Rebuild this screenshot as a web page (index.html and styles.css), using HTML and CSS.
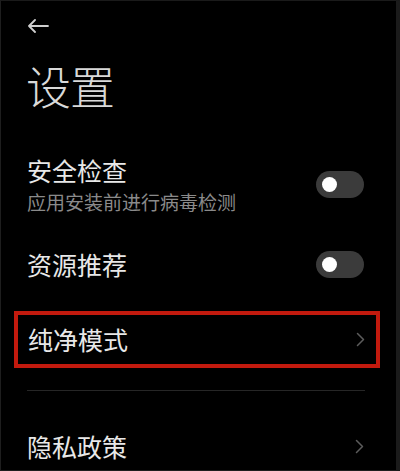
FILE: index.html
```html
<!DOCTYPE html>
<html lang="zh-CN">
<head>
<meta charset="utf-8">
<title>设置</title>
<link rel="stylesheet" href="styles.css">
</head>
<body>
<div class="screen">
  <div class="topbar">
    <svg class="back" width="22" height="14" viewBox="0 0 22 14" aria-label="返回">
      <path d="M21 7H2M8 1L2 7L8 13" fill="none" stroke="#cfcfcf" stroke-width="1.8" stroke-linecap="round" stroke-linejoin="round"/>
    </svg>
  </div>
  <h1 class="title">设置</h1>
  <div class="list">
    <div class="row row-tall">
      <div class="row-text">
        <div class="row-title">安全检查</div>
        <div class="row-sub">应用安装前进行病毒检测</div>
      </div>
      <div class="toggle"><span class="knob"></span></div>
    </div>
    <div class="row">
      <div class="row-title">资源推荐</div>
      <div class="toggle"><span class="knob"></span></div>
    </div>
    <div class="row row-marked">
      <div class="row-title">纯净模式</div>
      <svg class="chev" width="9" height="15" viewBox="0 0 9 15"><path d="M1.5 1.5L7.5 7.5L1.5 13.5" fill="none" stroke="#5c5c5c" stroke-width="1.5" stroke-linecap="round" stroke-linejoin="round"/></svg>
    </div>
    <div class="divider"></div>
    <div class="row row-last">
      <div class="row-title">隐私政策</div>
      <svg class="chev" width="9" height="15" viewBox="0 0 9 15"><path d="M1.5 1.5L7.5 7.5L1.5 13.5" fill="none" stroke="#5c5c5c" stroke-width="1.5" stroke-linecap="round" stroke-linejoin="round"/></svg>
    </div>
  </div>
</div>
</body>
</html>
```

FILE: styles.css
```css
html, body {
  margin: 0;
  padding: 0;
  background: #000;
}
body {
  font-family: "Noto Sans CJK SC", "Noto Sans", sans-serif;
}
.screen {
  width: 400px;
  height: 471px;
  box-sizing: border-box;
  background: #000;
  border-left: 1px solid #1e1e1e;
  border-top: 1px solid #1a1a1a;
  border-right: 4px solid #1b1b1b;
  border-bottom: 1px solid #1e1e1e;
  overflow: hidden;
}
.topbar {
  padding: 18px 0 0 26px;
  height: 14px;
  display: flex;
}
.back {
  display: block;
}
.title {
  margin: 30px 0 0 25px;
  font-size: 45px;
  line-height: 45px;
  font-weight: 300;
  color: #d9d9d9;
  letter-spacing: -1px;
}
.list {
  margin-top: 22px;
  display: flex;
  flex-direction: column;
}
.row {
  display: flex;
  align-items: center;
  justify-content: space-between;
  min-height: 68px;
  padding: 0 32px 0 26px;
}
.row-tall {
  padding-top: 20px;
  padding-bottom: 12px;
}
.row-text {
  display: flex;
  flex-direction: column;
  gap: 9px;
}
.row-title {
  font-size: 25px;
  line-height: 25px;
  color: #e8e8e8;
}
.row-sub {
  font-size: 19px;
  line-height: 19px;
  color: #8a8a8a;
}
.toggle {
  width: 48px;
  height: 27px;
  border-radius: 14px;
  background: #3b3b3b;
  display: flex;
  align-items: center;
  padding: 0 6px;
  box-sizing: border-box;
}
.knob {
  width: 15px;
  height: 15px;
  border-radius: 50%;
  background: #fff;
}
.row-marked {
  margin: 13px 16px 0 13px;
  min-height: 57px;
  box-sizing: border-box;
  border: 4px solid #c21a0e;
  padding: 0 11px 0 10px;
}
.divider {
  height: 1px;
  background: #262626;
  margin: 22px 31px 0 26px;
}
.row-last {
  margin-top: 21px;
}
.chev {
  display: block;
}
```
